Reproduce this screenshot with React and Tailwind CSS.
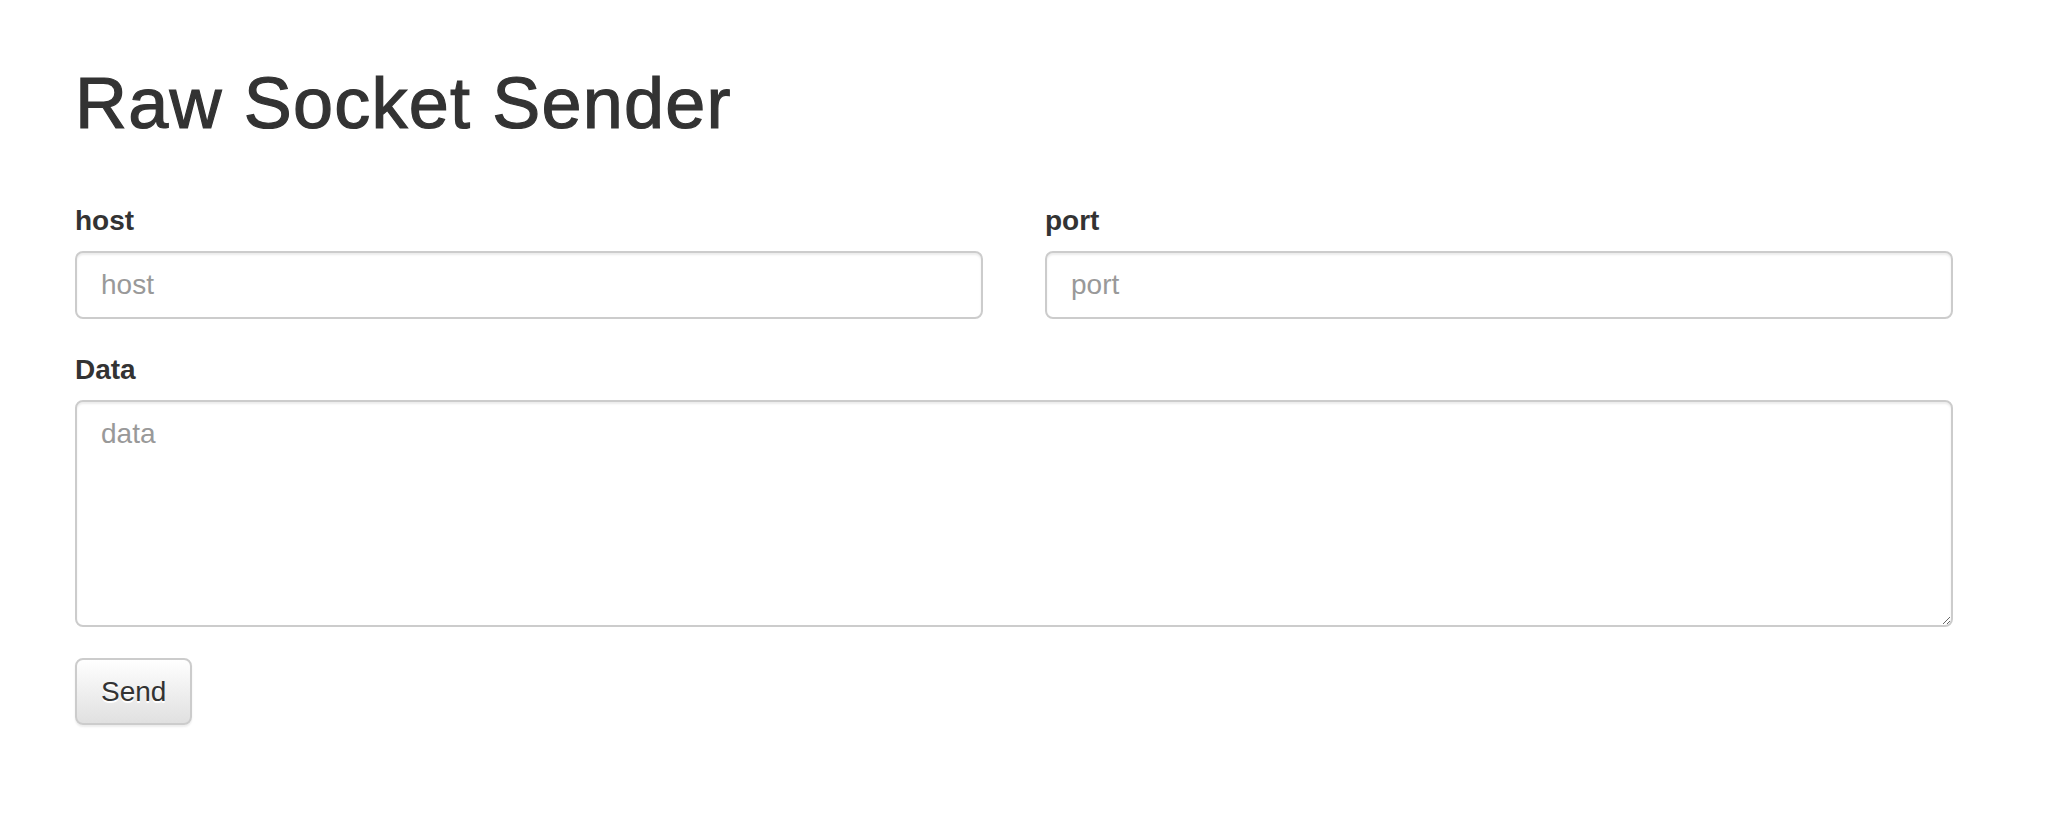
export default function App() {
  return (
    <div className="min-h-screen bg-white pl-[75px] pr-[117px] pt-[63px] text-[#333] font-['Liberation_Sans',Helvetica,Arial,sans-serif]">
      <h1 className="text-[72px] leading-[80px] font-normal tracking-[1.2px] [-webkit-text-stroke:1.2px_#333] mb-[58px]">
        Raw Socket Sender
      </h1>

      <form onSubmit={e => e.preventDefault()}>
        <div className="grid grid-cols-2 gap-x-[62px]">
          <div>
            <label className="block text-[28px] leading-[40px] font-bold mb-[10px]">host</label>
            <input
              type="text"
              placeholder="host"
              className="block w-full h-[68px] px-[24px] text-[28px] border-2 border-[#ccc] rounded-[8px] shadow-[inset_0_2px_2px_rgba(0,0,0,0.075)] outline-none placeholder:text-[#999]"
            />
          </div>
          <div>
            <label className="block text-[28px] leading-[40px] font-bold mb-[10px]">port</label>
            <input
              type="text"
              placeholder="port"
              className="block w-full h-[68px] px-[24px] text-[28px] border-2 border-[#ccc] rounded-[8px] shadow-[inset_0_2px_2px_rgba(0,0,0,0.075)] outline-none placeholder:text-[#999]"
            />
          </div>
        </div>

        <div className="mt-[31px]">
          <label className="block text-[28px] leading-[40px] font-bold mb-[10px]">Data</label>
          <textarea
            placeholder="data"
            className="block w-full h-[227px] px-[24px] py-[12px] text-[28px] leading-[40px] border-2 border-[#ccc] rounded-[8px] shadow-[inset_0_2px_2px_rgba(0,0,0,0.075)] outline-none placeholder:text-[#999]"
          />
        </div>

        <button
          type="submit"
          className="mt-[31px] h-[67px] px-[24px] text-[28px] text-[#333] border-2 border-[#ccc] rounded-[8px] bg-gradient-to-b from-white to-[#e0e0e0] shadow-[0_2px_2px_rgba(0,0,0,0.075)] [text-shadow:0_2px_0_#fff]"
        >
          Send
        </button>
      </form>
    </div>
  );
}
